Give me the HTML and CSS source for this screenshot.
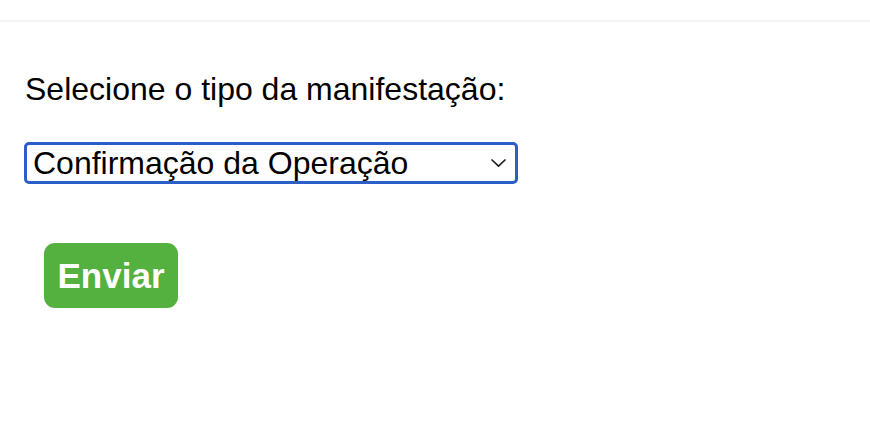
FILE: index.html
```html
<!DOCTYPE html>
<html lang="pt">
<head>
<meta charset="utf-8">
<link rel="stylesheet" href="styles.css">
</head>
<body>
<div class="topbar"></div>
<main class="content">
  <label class="label" for="tipo">Selecione o tipo da manifestação:</label>
  <div class="select-box">
    <span class="select-text">Confirmação da Operação</span>
    <svg class="chevron" width="17" height="10" viewBox="0 0 17 10"><path d="M1.5 1.5 L8.5 8.2 L15.5 1.5" fill="none" stroke="#1a1a1a" stroke-width="1.6"/></svg>
  </div>
  <div class="actions">
    <button class="btn">Enviar</button>
  </div>
</main>
</body>
</html>
```
FILE: styles.css
```css
html, body {
  margin: 0;
  padding: 0;
  background: #ffffff;
}
body {
  font-family: "Liberation Sans", Arial, sans-serif;
  color: #000;
}
.topbar {
  height: 20px;
  border-bottom: 2px solid #f3f3f3;
}
.content {
  display: flex;
  flex-direction: column;
  align-items: flex-start;
  padding: 0 0 0 24px;
}
.label {
  font-size: 32px;
  line-height: 37px;
  margin-top: 49px;
  padding-left: 1px;
}
.select-box {
  margin-top: 34px;
  box-sizing: border-box;
  width: 494px;
  height: 42px;
  border: 3px solid #2b5ec9;
  border-radius: 5px;
  display: flex;
  align-items: center;
  justify-content: space-between;
  padding: 0 8px 0 6px;
}
.select-text {
  font-size: 32px;
  line-height: 36px;
}
.chevron {
  display: block;
}
.actions {
  margin-top: 59px;
  padding-left: 20px;
}
.btn {
  box-sizing: border-box;
  width: 134px;
  height: 65px;
  background: #54b03f;
  color: #fff;
  border: none;
  border-radius: 11px;
  font-family: "Liberation Sans", Arial, sans-serif;
  font-weight: bold;
  font-size: 35px;
  padding: 0;
}
```
